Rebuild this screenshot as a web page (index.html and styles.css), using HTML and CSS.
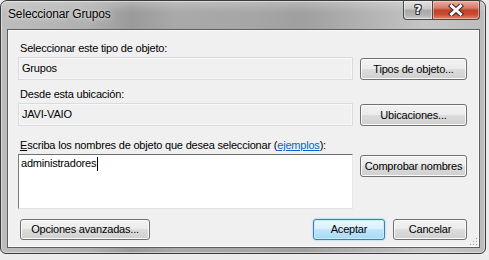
FILE: index.html
```html
<!DOCTYPE html>
<html lang="es">
<head>
<meta charset="utf-8">
<title>Seleccionar Grupos</title>
<link rel="stylesheet" href="styles.css">
</head>
<body>
<div class="window">
  <div class="titlebar">
    <span class="title">Seleccionar Grupos</span>
    <div class="caption-btns">
      <div class="cbtn help"><span class="qmark">?</span></div>
      <div class="cbtn close">
        <svg width="16" height="12" viewBox="0 0 16 12">
          <path d="M3.5 2 L12.5 10 M12.5 2 L3.5 10" stroke="#3a2a28" stroke-width="5" stroke-linecap="square"/>
          <path d="M3.5 2 L12.5 10 M12.5 2 L3.5 10" stroke="#ffffff" stroke-width="3" stroke-linecap="square"/>
        </svg>
      </div>
    </div>
  </div>
  <div class="client">
    <div class="section first">
      <div class="lbl">Seleccionar este tipo de objeto:</div>
      <div class="row">
        <div class="field">Grupos</div>
        <button class="btn side">Tipos de objeto...</button>
      </div>
    </div>
    <div class="section second">
      <div class="lbl">Desde esta ubicación:</div>
      <div class="row">
        <div class="field">JAVI-VAIO</div>
        <button class="btn side">Ubicaciones...</button>
      </div>
    </div>
    <div class="section third">
      <div class="lbl"><u>E</u>scriba los nombres de objeto que desea seleccionar (<a class="link" href="#">ejemplos</a>):</div>
      <div class="row">
        <div class="textbox">administradores<span class="caret"></span></div>
        <button class="btn side">Comprobar nombres</button>
      </div>
    </div>
    <div class="footer">
      <button class="btn adv">Opciones avanzadas...</button>
      <div class="footer-right">
        <button class="btn ok default">Aceptar</button>
        <button class="btn cancel">Cancelar</button>
      </div>
    </div>
    <svg class="grip" width="11" height="11" viewBox="0 0 11 11">
      <rect x="8" y="2" width="1" height="1" fill="#9a9a9a"/><rect x="9" y="3" width="1" height="1" fill="#fff"/>
      <rect x="5" y="5" width="1" height="1" fill="#9a9a9a"/><rect x="6" y="6" width="1" height="1" fill="#fff"/>
      <rect x="8" y="5" width="1" height="1" fill="#9a9a9a"/><rect x="9" y="6" width="1" height="1" fill="#fff"/>
      <rect x="2" y="8" width="1" height="1" fill="#9a9a9a"/><rect x="3" y="9" width="1" height="1" fill="#fff"/>
      <rect x="5" y="8" width="1" height="1" fill="#9a9a9a"/><rect x="6" y="9" width="1" height="1" fill="#fff"/>
      <rect x="8" y="8" width="1" height="1" fill="#9a9a9a"/><rect x="9" y="9" width="1" height="1" fill="#fff"/>
    </svg>
  </div>
</div>
</body>
</html>
```
FILE: styles.css
```css
* { box-sizing: border-box; }
html, body { margin: 0; padding: 0; }
body {
  width: 489px;
  height: 260px;
  background: #ececec;
  font-family: "Liberation Sans", Arial, sans-serif;
  font-size: 11px;
  letter-spacing: -0.2px;
  line-height: 15px;
  color: #000;
  overflow: hidden;
}
.window {
  width: 486px;
  height: 254px;
  border: 1px solid #3b3b3b;
  border-radius: 7px 7px 6px 6px;
  background:
    linear-gradient(180deg, rgba(255,255,255,0.25) 0px, rgba(255,255,255,0) 12px),
    linear-gradient(90deg, #bdbdbd 0%, #b0b0b0 18%, #9a9a9a 27%, #a9a9a9 36%, #a6a6a6 52%, #9f9f9f 62%, #b3b3b3 76%, #c6c6c6 88%, #bcbcbc 100%);
  box-shadow: inset 0 0 0 1px rgba(255,255,255,0.45);
  display: flex;
  flex-direction: column;
}
.titlebar {
  height: 28px;
  display: flex;
  align-items: flex-start;
  padding: 0 5px 0 7px;
  flex: none;
}
.title {
  margin-top: 6px;
  font-size: 12px;
  letter-spacing: -0.15px;
  line-height: 15px;
  text-shadow: 0 0 6px rgba(255,255,255,0.8), 0 0 2px rgba(255,255,255,0.6);
}
.caption-btns {
  margin-left: auto;
  display: flex;
  height: 19px;
}
.cbtn {
  height: 19px;
  border: 1px solid #4a4a4a;
  border-top: none;
  display: flex;
  align-items: center;
  justify-content: center;
}
.help {
  width: 29px;
  border-right: none;
  border-radius: 0 0 0 4px;
  background: linear-gradient(180deg, #e2e2e2 0%, #c9c9c9 45%, #a9a9a9 50%, #b4b4b4 80%, #cfcfcf 100%);
  box-shadow: inset 0 0 0 1px rgba(255,255,255,0.45);
}
.qmark {
  font-family: "DejaVu Sans", sans-serif;
  font-weight: bold;
  font-size: 12px;
  letter-spacing: 0;
  line-height: 12px;
  color: #fff;
  text-shadow: -1px 0 #333, 1px 0 #333, 0 -1px #333, 0 1px #333, 1px 1px #333, -1px -1px #333, 1px -1px #333, -1px 1px #333;
}
.close {
  width: 48px;
  border-radius: 0 0 4px 0;
  background: linear-gradient(180deg, #eab0a2 0%, #d77a66 40%, #c2412a 50%, #ca4b32 75%, #e5876c 100%);
  box-shadow: inset 0 0 0 1px rgba(255,210,200,0.5);
}
.client {
  flex: none;
  margin: 0 5px 0 6px;
  height: 219px;
  background: #f0f0f0;
  border: 1px solid #5e5e5e;
  box-shadow: inset 0 0 0 1px #fafafa;
  padding: 11px 12px 7px 10px;
  display: flex;
  flex-direction: column;
  position: relative;
}
.section { display: flex; flex-direction: column; }
.second { margin-top: 7px; }
.third { margin-top: 12px; }
.lbl {
  margin-left: 2px;
  margin-bottom: 1px;
  white-space: nowrap;
}
.link { color: #0066cc; text-decoration: underline; }
.row {
  display: flex;
  gap: 7px;
  align-items: flex-start;
}
.field {
  width: 335px;
  height: 23px;
  border: 1px solid #d8dce1;
  background: #f0f0f0;
  box-shadow: inset 0 0 0 1px #f7f7f7;
  padding: 3px 0 0 3px;
}
.textbox {
  width: 335px;
  height: 55px;
  background: #fff;
  border: 1px solid;
  border-color: #6f6f6f #e6e6e6 #e3e3e3 #7a7a7a;
  padding: 1px 0 0 2px;
  display: flex;
  align-items: flex-start;
}
.caret {
  display: inline-block;
  width: 1px;
  height: 14px;
  background: #000;
  margin-top: 1px;
  margin-left: 1px;
}
.btn {
  font-family: inherit;
  font-size: 11px;
  letter-spacing: -0.2px;
  line-height: 15px;
  color: #000;
  height: 22px;
  padding: 0;
  border: 1px solid #707070;
  border-radius: 3px;
  background: linear-gradient(180deg, #f2f2f2 0%, #ebebeb 50%, #dddddd 50%, #cfcfcf 100%);
  box-shadow: inset 0 0 0 1px #fbfbfb;
  text-align: center;
  white-space: nowrap;
}
.side {
  width: 107px;
  margin-top: 1px;
}
.footer {
  margin-top: 10px;
  display: flex;
  align-items: flex-start;
}
.footer .btn { height: 21px; }
.adv {
  width: 130px;
  margin-left: 2px;
}
.footer-right {
  margin-left: auto;
  display: flex;
  gap: 8px;
}
.ok { width: 72px; }
.cancel { width: 74px; }
.default {
  border-color: #3c7fb1;
  background: linear-gradient(180deg, #eaf6fd 0%, #d9f0fc 50%, #bee6fd 50%, #a7d9f5 100%);
  box-shadow: inset 0 0 0 1px #c9ecfc, 0 0 2px #6cc4f0;
}
.grip {
  position: absolute;
  right: 0;
  bottom: 0;
}
```
